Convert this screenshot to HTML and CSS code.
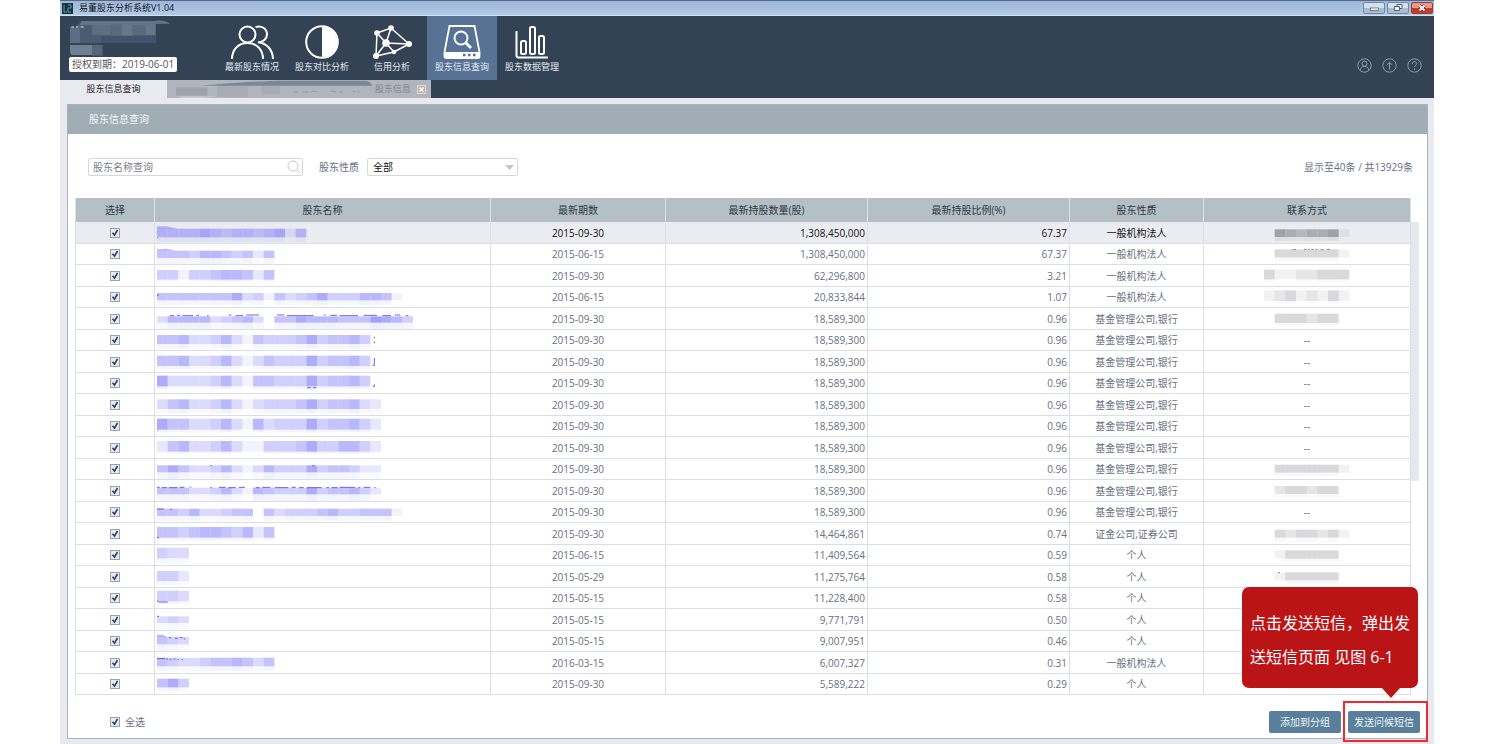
FILE: index.html
```html
<!DOCTYPE html>
<html lang="zh-CN">
<head>
    <meta charset="utf-8">
    <title>易董股东分析系统V1.04</title>
    <link rel="stylesheet" href="styles.css">
</head>
<body>
<div class="window">
    <div class="titlebar">
        <svg class="app-icon" viewBox="0 0 11 11"><rect width="11" height="11" fill="#163646"/><path d="M2 2v7h3M6 2h3v3H6v4h3" stroke="#5c9aa0" fill="none"/></svg>
        <span class="app-title">易董股东分析系统V1.04</span>
        <div class="win-buttons">
            <button class="win-btn" type="button" aria-label="最小化"><svg viewBox="0 0 20 10"><rect x="6.5" y="5" width="8" height="2.5" fill="#fff" stroke="#566579" stroke-width=".8"/></svg></button>
            <button class="win-btn" type="button" aria-label="还原"><svg viewBox="0 0 20 10"><g fill="#fff" stroke="#4c5b70"><path d="M9 1.5h5v4H9z"/><path d="M6.5 3.5h5v4h-5z"/></g></svg></button>
            <button class="win-btn win-close" type="button" aria-label="关闭"><svg viewBox="0 0 20 10"><path d="M7.5 2.5l5 5M12.5 2.5l-5 5" stroke="#6d2a28" stroke-width="3.2"/><path d="M7.5 2.5l5 5M12.5 2.5l-5 5" stroke="#fff" stroke-width="1.8"/></svg></button>
        </div>
    </div>

    <header class="topbar">
        <div class="brand">
            <svg class="brand-mask" viewBox="0 0 330 114">
                <path d="M18 24h12q10-2 22-18h216q30-6 50 8H276v58H18z" fill="#4c5b72"/>
                <path d="M52 6h216q30-6 50 8H276v4H48z" fill="#63728a"/>
                <path d="M18 28h30v44H18zM84 18h58v30H84z" fill="#5e6d83"/>
                <path d="M174 16h32v34h-32zM244 18h30v30h-30z" fill="#66758a"/>
                <path d="M142 16h32v34h-32zM206 18h38v30h-38z" fill="#5a697f"/>
                <path d="M112 52h162v20H112z" fill="#42526a"/>
                <path d="M18 78h66v30H30q-12 0-12-10z" fill="#707e91"/>
                <path d="M84 78h32v32H84z" fill="#56657a"/>
                <path d="M22 24h8M36 24h7M50 24h9" stroke="#dfe5ee" stroke-width="3"/>
            </svg>
            <span class="licence">授权到期：2019-06-01</span>
        </div>
        <nav class="nav">
            <a class="nav-item" href="#">
                <svg viewBox="0 0 44 36" fill="none" stroke="#fff" stroke-width="2"><circle cx="17.5" cy="10.5" r="8"/><path d="M2 35c0-9 6-16 15.5-16S33 26 33 35"/><path d="M25.5 3.2c6-2.6 11.500 1.800 11.500 7 0 4.800-4 8.300-9 8 8 .8 14.500 6.500 15 16.800"/></svg>
                <span>最新股东情况</span>
            </a>
            <a class="nav-item" href="#">
                <svg viewBox="0 0 44 36"><circle cx="22" cy="18" r="15.8" fill="none" stroke="#fff" stroke-width="2"/><path d="M22 2a16 16 0 0 1 0 32z" fill="#fff"/></svg>
                <span>股东对比分析</span>
            </a>
            <a class="nav-item" href="#">
                <svg viewBox="0 0 44 36"><path d="M7 9L21 4l18 16-15 8L6 32zM7 9l9 10L21 4M16 19l23 1M16 19l8 9M16 19L6 32" fill="none" stroke="#fff" stroke-width="1.5"/><g fill="#fff"><circle cx="7" cy="9" r="2.800"/><circle cx="21" cy="4" r="2.800"/><circle cx="16" cy="19" r="3.800"/><circle cx="39" cy="20" r="3"/><circle cx="24" cy="28" r="2.300"/><circle cx="6" cy="32" r="3"/></g></svg>
                <span>信用分析</span>
            </a>
            <a class="nav-item active" href="#">
                <svg viewBox="0 0 44 36"><path d="M9.5 2h25l5 26v4.500q0 1.500-2 1.500h-31q-2 0-2-1.500V28z" fill="none" stroke="#fff" stroke-width="1.8"/><path d="M4.5 28h35v5q0 1.500-2 1.500h-31q-2 0-2-1.500z" fill="#fff"/><circle cx="21" cy="14" r="6.5" fill="none" stroke="#fff" stroke-width="2"/><path d="M26 19l5 5" stroke="#fff" stroke-width="2.8"/><path d="M23 31h2.500M28 31h2.500M33 31h2.500" stroke="#587295" stroke-width="2.5"/></svg>
                <span>股东信息查询</span>
            </a>
            <a class="nav-item" href="#">
                <svg viewBox="0 0 44 36" fill="none" stroke="#fff" stroke-width="2"><path d="M6.5 7v24.500q0 2 2 2H38"/><rect x="11" y="17" width="5" height="13" rx="1.500"/><rect x="20" y="3" width="5" height="27" rx="1.500"/><rect x="29" y="12" width="5" height="18" rx="1.500"/></svg>
                <span>股东数据管理</span>
            </a>
        </nav>
        <div class="tools">
            <button class="tool" type="button" aria-label="用户"><svg viewBox="0 0 15 15"><circle cx="7.5" cy="7.5" r="6.700"/><circle cx="7.5" cy="5.700" r="2.500"/><path d="M3.200 12c.4-2.300 2-3.600 4.300-3.600s3.900 1.300 4.300 3.600"/></svg></button>
            <button class="tool" type="button" aria-label="升级"><svg viewBox="0 0 15 15"><circle cx="7.5" cy="7.5" r="6.700"/><path d="M7.500 11.500v-7M4.700 7l2.800-2.700L10.300 7"/></svg></button>
            <button class="tool" type="button" aria-label="帮助"><svg viewBox="0 0 15 15"><circle cx="7.5" cy="7.5" r="6.700"/><path d="M5.300 6c0-3 4.400-3 4.400-.3 0 1.600-2.200 1.600-2.200 3.500M7.500 10.500v1.400"/></svg></button>
        </div>
    </header>

    <div class="tabs">
        <a class="tab active" href="#">股东信息查询</a>
        <div class="tab tab-second">
            <svg class="tab-mask" viewBox="0 0 642 57"><path d="M100 18q120-12 240-16h280q16 2 22 16z" fill="#7c8795"/><path d="M20 24h100v26H20z" fill="#9da4ad"/><path d="M150 20h98v32h-98zM290 20h60v25h-60z" fill="#a6abb4"/><path d="M20 52h130l-40 5H40z" fill="#c9ced5"/><path d="M390 38h18M420 38h20M450 36h16M510 36h16M536 38h14M580 37h8M596 38h6" stroke="#90959e" stroke-width="3"/></svg>
            <span>股东信息</span>
            <button class="tab-close" type="button" aria-label="关闭标签"><svg viewBox="0 0 9 9"><rect x=".5" y=".5" width="8" height="8" fill="#b9b4a4" stroke="#dedbd0"/><path d="M2.500 2.500l4 4M6.500 2.500l-4 4" stroke="#fff" stroke-width="1.500"/></svg></button>
        </div>
    </div>

    <main class="main">
        <section class="panel">
            <h1 class="panel-title">股东信息查询</h1>
            <form class="filters">
                <div class="search">
                    <input class="search-input" type="text" placeholder="股东名称查询" aria-label="股东名称查询">
                    <svg class="search-icon" viewBox="0 0 14 14"><circle cx="6" cy="6" r="5"/><path d="M9.800 9.800l3 3"/></svg>
                </div>
                <label class="kind-label" for="kind">股东性质</label>
                <select class="kind" id="kind"><option>全部</option></select>
                <span class="count">显示至40条 / 共13929条</span>
            </form>

            <div class="grid">
                <table class="holders">
                    <colgroup>
                        <col class="c-check"><col><col class="c-date"><col class="c-num"><col class="c-num"><col class="c-kind"><col class="c-contact">
                    </colgroup>
                    <thead>
                        <tr><th>选择</th><th>股东名称</th><th>最新期数</th><th>最新持股数量(股)</th><th>最新持股比例(%)</th><th>股东性质</th><th>联系方式</th></tr>
                    </thead>
                    <tbody id="rows"></tbody>
                </table>
                <div class="scroll"></div>
            </div>

            <div class="footer">
                <label class="all"><input class="check" type="checkbox" checked>全选</label>
                <button class="btn" type="button">添加到分组</button>
                <div class="send">
                    <button class="btn" type="button">发送问候短信</button>
                    <div class="callout">点击发送短信，弹出发送短信页面 见图 6-1</div>
                </div>
            </div>
        </section>
    </main>
</div>
<script src="script.js"></script>
</body>
</html>
```
FILE: styles.css
```css
* {
    box-sizing: border-box;
}

body {
    margin: 0;
    background: #fff;
    color: #66707e;
    font-family: "Open Sans", "Noto Sans CJK SC", sans-serif;
    font-size: 10px;
    line-height: 14px;
}

button, input, select {
    font: inherit;
}

button {
    padding: 0;
    cursor: pointer;
}

a {
    color: inherit;
    text-decoration: none;
}

svg {
    display: block;
}

.window {
    margin: 0 61px 0 60px;
    min-height: 100vh;
    display: flex;
    flex-direction: column;
    background: #e8eaf0;
}

/* title bar */
.titlebar {
    display: flex;
    align-items: center;
    height: 16px;
    padding: 0 1px 0 2px;
    border-top: 1px solid #566a86;
    border-bottom: 1px solid #d2e3f5;
    background: linear-gradient(#9fb7d6, #b3cae8);
}

.app-icon {
    width: 11px;
    height: 11px;
}

.app-title {
    margin-left: 6px;
    font-size: 9px;
    color: #10151c;
}

.win-buttons {
    display: flex;
    gap: 2px;
    margin-left: auto;
}

.win-btn {
    width: 22px;
    height: 12px;
    border: 1px solid #75879f;
    border-radius: 2px;
    background: linear-gradient(#d3e0ef 50%, #a9bcd4 50%);
}

.win-btn svg {
    width: 20px;
    height: 10px;
}

.win-close {
    border-color: #8c4440;
    background: linear-gradient(#e39a8b 45%, #c93a26 50%);
}

/* top navigation */
.topbar {
    display: flex;
    height: 64px;
    background: #344256;
    color: #e6ebf2;
}

.brand {
    width: 157px;
    padding: 3px 0 0 4px;
}

.brand-mask {
    width: 110px;
    height: 38px;
}

.licence {
    display: inline-block;
    height: 15px;
    margin-left: 5px;
    padding: 0 3px;
    border-radius: 2px;
    background: #fff;
    color: #555;
    font-size: 10px;
    line-height: 15px;
}

.nav {
    display: flex;
}

.nav-item {
    display: flex;
    flex-direction: column;
    align-items: center;
    width: 70px;
    padding-top: 8px;
    font-size: 9px;
    line-height: 14px;
    white-space: nowrap;
}

.nav-item svg {
    width: 44px;
    height: 36px;
}

.nav-item.active {
    background: #587295;
}

.tools {
    display: flex;
    align-items: flex-end;
    gap: 10px;
    margin-left: auto;
    padding: 0 12px 7px 0;
}

.tool {
    border: 0;
    background: none;
}

.tool svg {
    width: 15px;
    height: 15px;
    fill: none;
    stroke: #8f9cb0;
}

/* tabs */
.tabs {
    display: flex;
    height: 18px;
    background: #344256;
    font-size: 9px;
    line-height: 18px;
}

.tab {
    width: 107px;
    text-align: center;
}

.tab.active {
    background: #e8eaf0;
    color: #1c2129;
}

.tab-second {
    display: flex;
    align-items: center;
    width: 264px;
    padding-right: 5px;
    background: #b1b6be;
    color: #7f8590;
}

.tab-mask {
    flex: 1;
    min-width: 0;
    height: 18px;
}

.tab-close {
    width: 9px;
    height: 9px;
    margin-left: 6px;
    border: 0;
    background: none;
}

.tab-close svg {
    width: 9px;
    height: 9px;
}

/* content panel */
.main {
    flex: 1;
    padding: 6px 6px 6px 7px;
}

.panel {
    border: 1px solid #a9b0ba;
    background: #fff;
}

.panel-title {
    margin: 0;
    padding-left: 21px;
    background: #a0adb5;
    color: #f4f7f9;
    font-size: 10px;
    font-weight: normal;
    line-height: 29px;
}

.filters {
    display: flex;
    align-items: center;
    padding: 24px 14px 22px 20px;
}

.search {
    position: relative;
}

.search-input,
.kind {
    height: 18px;
    border: 1px solid #d5d7dc;
    border-radius: 2px;
    background: #fff;
    outline: none;
}

.search-input {
    display: block;
    width: 215px;
    padding: 0 22px 0 4px;
    color: #333;
}

.search-input::placeholder {
    color: #7b8087;
    opacity: 1;
}

.search-icon {
    position: absolute;
    top: 2px;
    right: 2px;
    width: 14px;
    height: 14px;
    fill: none;
    stroke: #c6cad0;
}

.kind-label {
    margin: 0 8px 0 16px;
}

.kind {
    width: 151px;
    padding: 0 5px;
    appearance: none;
    background: #fff url("data:image/svg+xml,%3Csvg xmlns='http://www.w3.org/2000/svg' width='9' height='5'%3E%3Cpath d='M0 0h9L4.500 5z' fill='%23c2c5ca'/%3E%3C/svg%3E") no-repeat right 3px center;
    color: #111;
}

.count {
    margin-left: auto;
}

/* holders table */
.grid {
    display: flex;
    padding: 0 8px 0 7px;
}

.holders {
    flex: 1;
    table-layout: fixed;
    border-spacing: 0;
    border-left: 1px solid #dcdfe2;
}

.c-check { width: 79px; }
.c-date { width: 175px; }
.c-num { width: 202px; }
.c-kind { width: 134px; }
.c-contact { width: 207px; }

.holders th {
    height: 24px;
    padding: 0;
    border-right: 1px solid #dde2e5;
    background: #b4bfc6;
    color: #30383f;
    font-weight: normal;
}

.holders td {
    height: 21px;
    padding: 0;
    border-right: 1px solid #dcdfe2;
    border-bottom: 1px solid #dcdfe2;
    text-align: center;
    line-height: 20px;
}

.holders tr:nth-child(odd) td {
    height: 22px;
}

.holders tbody tr:first-child td {
    background: #ebecf1;
    color: #111;
}

.holders .num {
    padding-right: 2px;
    text-align: right;
}

.holders .name {
    padding-left: 2px;
}

.mask {
    height: 20px;
}

.name .mask {
    width: 288px;
}

.name .mask rect,
.name .mask .brush {
    fill: #8c88fa;
}

.mask .ink {
    fill: none;
    stroke: #4a3fd0;
    stroke-width: 3;
    opacity: 0.8;
}

.contact .mask {
    width: 86px;
    margin: 0 auto;
}

.contact .mask rect {
    fill: #80828c;
}

.contact .mask .ink {
    stroke: #777;
}

.check {
    display: block;
    width: 10px;
    height: 10px;
    margin: 0 auto;
    appearance: none;
    border: 1px solid #98a3af;
    background: #e6ebf0;
}

.check:checked {
    background: #e6ebf0 url("data:image/svg+xml,%3Csvg xmlns='http://www.w3.org/2000/svg' width='8' height='8'%3E%3Cpath d='M1.500 3.800l2 2.400L6.500 1' fill='none' stroke='%232c3f63' stroke-width='1.600'/%3E%3C/svg%3E") no-repeat;
}

.scroll {
    width: 8px;
    height: 259px;
    margin-top: 24px;
    background: #e7e8ef;
}

/* bottom bar */
.footer {
    display: flex;
    align-items: center;
    gap: 7px;
    padding: 16px 7px 5px 42px;
}

.all {
    display: flex;
    align-items: center;
    gap: 5px;
    margin-right: auto;
}

.btn {
    display: block;
    width: 72px;
    height: 22px;
    border: 0;
    border-radius: 2px;
    background: #5a7f9c;
    color: #eef4f8;
    white-space: nowrap;
}

.send {
    position: relative;
}

.send::after {
    content: "";
    position: absolute;
    top: -10px;
    right: -8px;
    bottom: -9px;
    left: -5px;
    border: 2px solid #ee2a2e;
}

.callout {
    position: absolute;
    right: 2px;
    bottom: 45px;
    width: 176px;
    padding: 19px 8px 14px;
    border-radius: 7px;
    background: #ba1416;
    color: #fff;
    font-size: 16px;
    line-height: 34px;
}

.callout::after {
    content: "";
    position: absolute;
    right: 18px;
    bottom: -10px;
    border: 9px solid transparent;
    border-top: 10px solid #ba1416;
    border-bottom: 0;
}
```
FILE: script.js
```
const ORG = '一般机构法人';
const FUND = '基金管理公司,银行';
const BROKER = '证金公司,证券公司';
const PERSON = '个人';

// date, amount, percent, kind, name mask, contact mask
// mask: [shade of each block, top, height, height of the pale strip, ink path, brush path]
const holders = [
    ['2015-09-30', '1,308,450,000', '67.37', ORG, ['66667656656726', 17, 26, 14, 'M0 42v5', 'M0 10h30l30 8H0z'], ['07656671', 19, 23, 12]],
    ['2015-06-15', '1,308,450,000', '67.37', ORG, ['55546654525', 20, 22, 18, '', 'M0 16l30-2 24 6H0z'], ['03333331', 16, 24, 10, 'M86 17h10M120 16h8M132 16h5M142 16h7M155 16h5M170 17h8M188 16h10']],
    ['2015-09-30', '62,296,800', '3.21', ORG, ['44144566525', 12, 29, 6], ['31122333', 11, 29, 8]],
    ['2015-06-15', '20,833,844', '1.07', ORG, ['55555557341534574446651', 18, 22, 14, 'M-2 28l8-6'], ['12312131', 10, 32, 8]],
    ['2015-09-30', '18,589,300', '0.96', FUND, ['366663456305576665558764', 22, 19, 22, 'M38 20h14M60 19h10M76 20h32M118 19h8M150 20h5M215 18h8M236 20h22M268 18h38M360 18h22M390 20h80M500 18h6M520 19h20M548 20h55M620 19h40M676 20h26M714 18h16M746 20h8'], ['03332330', 14, 28, 6]],
    ['2015-09-30', '18,589,300', '0.96', FUND, ['55633463154445745564', 15, 27, 14, 'M652 20v4M652 34v6'], null],
    ['2015-09-30', '18,589,300', '0.96', FUND, ['55633463135444745564', 11, 31, 10, 'M652 18v22h-6'], null],
    ['2015-09-30', '18,589,300', '0.96', FUND, ['73333463155444745564', 8, 32, 8, 'M450 44h12M468 44h10M652 34v6h-5'], null],
    ['2015-09-30', '18,589,300', '0.96', FUND, ['356334631344457455632', 13, 29, 13], null],
    ['2015-09-30', '18,589,300', '0.96', FUND, ['755334631634447455642', 8, 33, 7, 'M0 40v4'], null],
    ['2015-09-30', '18,589,300', '0.96', FUND, ['256334631144457446642', 9, 32, 6], null],
    ['2015-09-30', '18,589,300', '0.96', FUND, ['575334631364447455422', 19, 21, 20, 'M160 20h4M466 20h6'], ['03333331', 17, 24, 10]],
    ['2015-09-30', '18,589,300', '0.96', FUND, ['555334631654447455642', 20, 20, 22, 'M0 19h8M14 20h16M36 20h26M68 19h14M98 18h5M160 20h5M186 19h20M214 20h22M246 19h18M296 20h12M316 19h24M354 20h40M404 19h12M426 20h14M450 20h44M508 20h8M524 20h18M548 19h46M604 20h6M620 19h20M652 20h4'], ['02332330', 15, 24, 10]],
    ['2015-09-30', '18,589,300', '0.96', FUND, ['55463345505344456445551', 20, 22, 14, 'M0 21h20M40 22h5'], null],
    ['2015-09-30', '14,464,861', '0.74', BROKER, ['55456654625', 9, 32, 8, 'M-2 41h8'], ['03233231', 17, 24, 12]],
    ['2015-06-15', '11,409,564', '0.59', PERSON, ['433', 8, 32, 14], ['01333330', 16, 25, 8]],
    ['2015-05-29', '11,275,764', '0.58', PERSON, ['442', 12, 30, 12], ['01333330', 16, 24, 10, 'M42 17h6']],
    ['2015-05-15', '11,228,400', '0.58', PERSON, ['443', 8, 32, 8, 'M0 38l6 4h26'], ['01333330', 14, 26, 8]],
    ['2015-05-15', '9,771,791', '0.50', PERSON, ['343', 19, 20, 20, 'M0 19h6'], ['01333330', 14, 26, 8]],
    ['2015-05-15', '9,007,951', '0.46', PERSON, ['543', 17, 23, 20, 'M36 20h6M54 22h8M68 20h8M80 24h5', 'M0 12q16-4 30 6H0z'], ['01333330', 14, 26, 8]],
    ['2016-03-15', '6,007,327', '0.31', ORG, ['54334556535', 14, 26, 14, 'M0 17h24M28 18h5M38 20h5M50 18h5M62 20h4M74 20h4'], ['01333330', 14, 26, 8]],
    ['2015-09-30', '5,589,222', '0.29', PERSON, ['574', 14, 26, 10], ['01333330', 14, 26, 8]]
];

function mask(data, width) {
    const [shades, top, height, strip, ink, brush] = data;
    let out = '';
    [...shades].forEach((shade, i) => {
        const x = i * 32;
        const w = Math.min(32, width - x);
        if (shade > 0) {
            out += `<rect x="${x}" y="${top}" width="${w}" height="${height}" opacity="${shade / 10}"/>`;
        }
        if (shade > 1) {
            out += `<rect x="${x}" y="${top + height}" width="${w}" height="${strip}" opacity="${shade / 55}"/>`;
        }
    });
    if (brush) out += `<path class="brush" d="${brush}" opacity="0.6"/>`;
    if (ink) out += `<path class="ink" d="${ink}"/>`;
    return `<svg class="mask" viewBox="0 0 ${width} 60">${out}</svg>`;
}

document.getElementById('rows').innerHTML = holders.map(h => `
    <tr>
        <td><input class="check" type="checkbox" aria-label="选择" checked></td>
        <td class="name">${mask(h[4], 864)}</td>
        <td>${h[0]}</td>
        <td class="num">${h[1]}</td>
        <td class="num">${h[2]}</td>
        <td>${h[3]}</td>
        <td class="contact">${h[5] ? mask(h[5], 258) : '--'}</td>
    </tr>`).join('');
```
